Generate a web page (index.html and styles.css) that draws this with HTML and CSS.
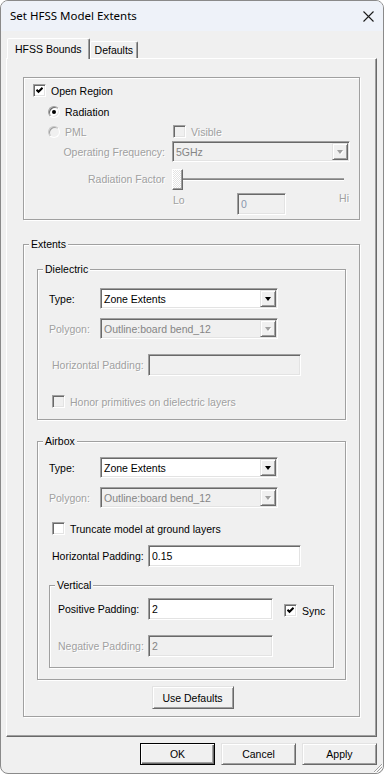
FILE: index.html
```html
<!DOCTYPE html>
<html lang="en">

<head>
  <meta charset="UTF-8">
  <meta name="viewport" content="width=device-width, initial-scale=1.0">
  <title>Set HFSS Model Extents</title>
  <link rel="stylesheet" href="styles.css">
</head>

<body>
  <div class="window">
    <div class="titlebar">
      <span class="title">Set HFSS Model Extents</span>
      <span class="close">
        <svg width="11" height="11" viewBox="0 0 11 11"><path d="M0.5 0.5 L10.5 10.5 M10.5 0.5 L0.5 10.5" stroke="#1b1b1b" stroke-width="1.1" fill="none"/></svg>
      </span>
    </div>

    <div class="content">
      <div class="tabs">
        <div class="tab active">HFSS Bounds</div>
        <div class="tab">Defaults</div>
      </div>

      <div class="panel">
        <!-- open region -->
        <div class="group open-region">
          <div class="row r-open">
            <span class="check"><svg width="7" height="7" viewBox="0 0 7 7"><path d="M0.5 2.8 L2.5 4.8 L6.5 0.8" stroke="#000" stroke-width="2" fill="none"/></svg></span>Open Region
          </div>
          <div class="row r-radiation">
            <span class="radio checked"></span>Radiation
          </div>
          <div class="row r-pml">
            <div class="pml disabled"><span class="radio off"></span>PML</div>
            <div class="visible disabled"><span class="check off"></span>Visible</div>
          </div>
          <div class="row r-freq">
            <div class="lbl disabled">Operating Frequency:</div>
            <div class="combo off freq"><span class="val">5GHz</span><span class="arrow"></span></div>
          </div>
          <div class="row r-factor">
            <div class="lbl disabled">Radiation Factor</div>
            <div class="slider"><span class="thumb"></span><span class="track"></span></div>
          </div>
          <div class="row r-ticks">
            <span class="lo disabled">Lo</span>
            <span class="edit off factor">0</span>
            <span class="hi disabled">Hi</span>
          </div>
        </div>

        <!-- extents -->
        <fieldset class="extents">
          <legend>Extents</legend>
          <div class="fs-body">

            <fieldset class="dielectric">
              <legend>Dielectric</legend>
              <div class="fs-body">
                <div class="field">
                  <span class="lbl">Type:</span>
                  <div class="combo"><span class="val">Zone Extents</span><span class="arrow"></span></div>
                </div>
                <div class="field gap9">
                  <span class="lbl disabled">Polygon:</span>
                  <div class="combo off"><span class="val">Outline:board bend_12</span><span class="arrow"></span></div>
                </div>
                <div class="field pad gap15">
                  <span class="lbl disabled">Horizontal Padding:</span>
                  <span class="edit off"></span>
                </div>
                <div class="field opt gap19 disabled">
                  <span class="check off"></span>Honor primitives on dielectric layers
                </div>
              </div>
            </fieldset>

            <fieldset class="airbox">
              <legend>Airbox</legend>
              <div class="fs-body">
                <div class="field">
                  <span class="lbl">Type:</span>
                  <div class="combo"><span class="val">Zone Extents</span><span class="arrow"></span></div>
                </div>
                <div class="field gap9">
                  <span class="lbl disabled">Polygon:</span>
                  <div class="combo off"><span class="val">Outline:board bend_12</span><span class="arrow"></span></div>
                </div>
                <div class="field opt gap14">
                  <span class="check"></span>Truncate model at ground layers
                </div>
                <div class="field pad gap10">
                  <span class="lbl">Horizontal Padding:</span>
                  <span class="edit">0.15</span>
                </div>

                <fieldset class="vertical">
                  <legend>Vertical</legend>
                  <div class="fs-body">
                    <div class="field">
                      <span class="lbl">Positive Padding:</span>
                      <span class="edit short">2</span>
                      <span class="sync"><span class="check"><svg width="7" height="7" viewBox="0 0 7 7"><path d="M0.5 2.8 L2.5 4.8 L6.5 0.8" stroke="#000" stroke-width="2" fill="none"/></svg></span>Sync</span>
                    </div>
                    <div class="field gap15">
                      <span class="lbl disabled">Negative Padding:</span>
                      <span class="edit short off">2</span>
                    </div>
                  </div>
                </fieldset>
              </div>
            </fieldset>

            <button class="btn defaults">Use Defaults</button>
          </div>
        </fieldset>
      </div>

      <div class="buttons">
        <button class="btn default">OK</button>
        <button class="btn">Cancel</button>
        <button class="btn">Apply</button>
      </div>
    </div>

    <svg class="grip" width="11" height="11" viewBox="0 0 11 11">
      <path d="M10 2 L2 10 M10 5 L5 10 M10 8 L8 10" stroke="#a0a0a0" stroke-width="1" fill="none"/>
      <path d="M11 2 L2 11 M11 5 L5 11 M11 8 L8 11" stroke="#fff" stroke-width="1" fill="none"/>
    </svg>
  </div>
</body>

</html>
```

FILE: styles.css
```css
/* base */
* {
  box-sizing: border-box;
}

body {
  margin: 0;
  font-family: "Liberation Sans", Arial, sans-serif;
  font-size: 10.5px;
  line-height: 12px;
  color: #000;
  background: #fff;
}

.disabled {
  color: #a0a0a0;
  text-shadow: 1px 1px 0 #fff;
}

/* window frame */
.window {
  position: relative;
  width: 384px;
  height: 774px;
  border: 1px solid #8a8a8a;
  border-radius: 8px;
  overflow: hidden;
  background: #f0f0f0;
}

.titlebar {
  height: 30px;
  background: #eef2f9;
  display: flex;
  align-items: center;
  justify-content: space-between;
  padding-left: 9px;
}

.title {
  font-family: "Noto Sans", sans-serif;
  font-size: 11.5px;
}

.close {
  width: 30px;
  height: 30px;
  display: flex;
  align-items: center;
  justify-content: center;
}

.content {
  padding: 7px 6px 0 5px;
}

/* tabs */
.tabs {
  display: flex;
  align-items: flex-end;
  height: 20px;
  padding-left: 1px;
}

.tab {
  height: 17px;
  display: flex;
  align-items: center;
  padding: 0 4px 0 4px;
  border: 1px solid;
  border-bottom: 0;
  border-color: #fff #696969 transparent #fff;
  border-radius: 2px 2px 0 0;
  box-shadow: inset -1px 0 0 #a0a0a0;
}

.tab.active {
  height: 21px;
  margin-bottom: -1px;
  padding: 0 7px;
  position: relative;
  z-index: 1;
  background: #f0f0f0;
}

.panel {
  border: 1px solid;
  border-color: #fff #696969 #696969 #fff;
  box-shadow: inset -1px -1px 0 #a0a0a0;
  padding: 18px 16px 19px 16px;
}

/* etched groups */
.group,
fieldset {
  border: 1px solid #a0a0a0;
  box-shadow: inset 1px 1px 0 #fff, 1px 1px 0 #fff;
}

fieldset {
  margin: 0;
  padding: 0;
  min-width: 0;
}

legend {
  margin-left: 5px;
  padding: 0 2px;
  line-height: 12px;
  background: #f0f0f0;
}

/* open region group */
.open-region {
  padding-bottom: 4px;
}

.row {
  display: flex;
  align-items: center;
}

.r-open {
  height: 13px;
  margin-top: 6px;
  padding-left: 9px;
}

.r-radiation {
  height: 12px;
  margin-top: 9px;
  padding-left: 24px;
}

.r-pml {
  height: 13px;
  margin-top: 7px;
}

.pml {
  width: 148px;
  padding-left: 24px;
  display: flex;
  align-items: center;
}

.visible {
  display: flex;
  align-items: center;
  padding-left: 1px;
}

.r-freq {
  height: 21px;
  margin-top: 3px;
}

.r-factor {
  height: 22px;
  margin-top: 6px;
}

.open-region .lbl {
  width: 141px;
  text-align: right;
  margin-right: 7px;
}

.freq {
  width: 172px;
}

.slider {
  width: 172px;
  height: 22px;
  display: flex;
  align-items: center;
}

.thumb {
  width: 11px;
  height: 21px;
  border: 1px solid;
  border-color: #fff #696969 #696969 #fff;
  box-shadow: inset -1px -1px 0 #a0a0a0;
  background: repeating-conic-gradient(#fff 0 25%, #e3e3e3 0 50%) 0 0 / 2px 2px;
}

.track {
  flex: 1;
  height: 3px;
  background: #808080;
  border-top: 1px solid #a0a0a0;
  border-bottom: 1px solid #fff;
}

.r-ticks {
  height: 22px;
  margin-top: 3px;
  margin-left: 148px;
  width: 177px;
  align-items: flex-start;
}

.lo {
  width: 65px;
  padding-left: 1px;
  margin-top: 1px;
}

.hi {
  margin-left: auto;
  margin-top: -1px;
}

.edit.factor {
  width: 49px;
}

/* extents */
.extents {
  margin-top: 18px;
}

.extents > .fs-body {
  padding: 13px 13px 7px;
}

.dielectric > .fs-body {
  padding: 13px 11px 11px;
}

.airbox {
  margin-top: 15px;
}

.airbox > .fs-body {
  padding: 10px 11px 11px;
}

.vertical {
  margin-top: 12px;
}

.vertical > .fs-body {
  padding: 7px 0 10px 8px;
}

.field {
  display: flex;
  align-items: center;
}

.field .lbl {
  width: 51px;
  flex-shrink: 0;
}

.field.pad .lbl {
  width: 99px;
  padding-left: 3px;
}

.vertical .field .lbl {
  width: 90px;
}

.field.opt {
  height: 13px;
  padding-left: 3px;
}

.gap9 { margin-top: 9px; }
.gap10 { margin-top: 10px; }
.gap14 { margin-top: 14px; }
.gap15 { margin-top: 15px; }
.gap19 { margin-top: 19px; }

/* controls */
.check {
  width: 13px;
  height: 13px;
  flex-shrink: 0;
  margin-right: 5px;
  display: inline-flex;
  align-items: center;
  justify-content: center;
  border: 1px solid;
  border-color: #a0a0a0 #fff #fff #a0a0a0;
  box-shadow: inset 1px 1px 0 #696969, inset -1px -1px 0 #e3e3e3;
  background: #fff;
}

.check.off {
  background: #f0f0f0;
}

.radio {
  width: 12px;
  height: 12px;
  flex-shrink: 0;
  margin-right: 5px;
  display: inline-flex;
  align-items: center;
  justify-content: center;
  border-radius: 50%;
  border: 1px solid;
  border-color: #a0a0a0 #fff #fff #a0a0a0;
  box-shadow: inset 1px 1px 0 #696969, inset -1px -1px 0 #e3e3e3;
  background: #fff;
}

.radio.off {
  border-color: #c8c8c8 #fff #fff #c8c8c8;
  box-shadow: inset 1px 1px 0 #a0a0a0;
  background: #f0f0f0;
}

.radio.checked::after {
  content: "";
  width: 4px;
  height: 4px;
  border-radius: 50%;
  background: #000;
}

.combo {
  width: 178px;
  height: 21px;
  display: flex;
  padding: 1px;
  border: 1px solid;
  border-color: #a0a0a0 #fff #fff #a0a0a0;
  box-shadow: inset 1px 1px 0 #696969, inset -1px -1px 0 #e3e3e3;
  background: #fff;
}

.combo.off {
  background: #f0f0f0;
  color: #858585;
}

.combo .val {
  flex: 1;
  padding-left: 2px;
  display: flex;
  align-items: center;
  white-space: nowrap;
  overflow: hidden;
}

.arrow {
  width: 16px;
  display: flex;
  align-items: center;
  justify-content: center;
  border: 1px solid;
  border-color: #e3e3e3 #696969 #696969 #e3e3e3;
  box-shadow: inset 1px 1px 0 #fff, inset -1px -1px 0 #a0a0a0;
  background: #f0f0f0;
}

.arrow::after {
  content: "";
  width: 0;
  height: 0;
  border-left: 3.5px solid transparent;
  border-right: 3.5px solid transparent;
  border-top: 4px solid #000;
}

.combo.off .arrow::after {
  border-top-color: #a0a0a0;
  filter: drop-shadow(1px 1px 0 #fff);
}

.edit {
  width: 153px;
  height: 22px;
  flex-shrink: 0;
  display: flex;
  align-items: center;
  padding-left: 3px;
  border: 1px solid;
  border-color: #a0a0a0 #fff #fff #a0a0a0;
  box-shadow: inset 1px 1px 0 #696969, inset -1px -1px 0 #e3e3e3;
  background: #fff;
}

.edit.off {
  background: #f0f0f0;
  color: #858585;
}

.edit.factor {
  color: #8a96ad;
}

.edit.short {
  width: 125px;
}

.sync {
  display: flex;
  align-items: center;
  margin-left: 11px;
  margin-top: 3px;
}

/* buttons */
.btn {
  height: 23px;
  width: 75px;
  padding: 0;
  font: inherit;
  color: #000;
  background: #f0f0f0;
  border: 1px solid;
  border-color: #e3e3e3 #696969 #696969 #e3e3e3;
  box-shadow: inset 1px 1px 0 #fff, inset -1px -1px 0 #a0a0a0;
}

.btn.defaults {
  display: block;
  width: 82px;
  margin: 6px auto 0;
  position: relative;
  left: 1px;
}

.btn.default {
  border-color: #000;
  box-shadow: inset 1px 1px 0 #fff, inset -1px -1px 0 #696969, inset -2px -2px 0 #a0a0a0;
}

.buttons {
  display: flex;
  justify-content: flex-end;
  gap: 6px;
  margin-top: 6px;
}

.buttons .btn {
  height: 22px;
}

/* resize grip in the corner */
.grip {
  position: absolute;
  right: 0;
  bottom: 0;
}
```
